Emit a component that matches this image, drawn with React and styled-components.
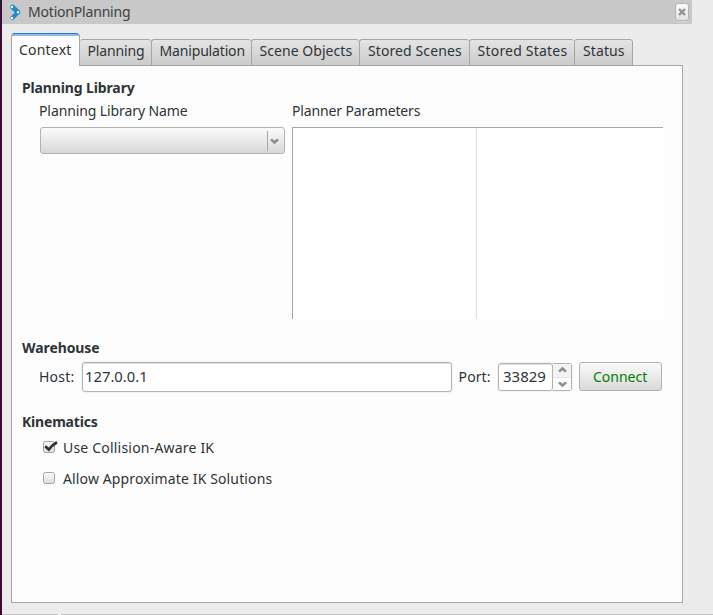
import React from 'react';
import styled, { createGlobalStyle } from 'styled-components';

const Global = createGlobalStyle`
  *, *::before, *::after { box-sizing: border-box; }
  html, body { margin: 0; height: 100%; overflow: hidden; background: #ececec; }
  body {
    font-family: "Noto Sans", "Open Sans", sans-serif;
    font-size: 14px;
    line-height: 20px;
    color: #2e3436;
  }
`;

const Text = styled.span`
  display: block;
  white-space: pre;
  font-size: ${p => p.$size || 14}px;
  font-weight: ${p => (p.$bold ? 700 : 400)};
  letter-spacing: ${p => p.$track || 0}px;
`;

const Window = styled.div`
  width: 713px;
  height: 615px;
  border-left: 2px solid #3b0a35;
  background: #ececec;
  display: flex;
  flex-direction: column;
`;

const TitleBar = styled.header`
  width: 690px;
  height: 24px;
  flex: none;
  display: flex;
  align-items: center;
  padding: 0 3px 0 6px;
  background: #c8c8c8;
`;

const TitleText = styled(Text)`
  margin-left: 6px;
  flex: 1;
  color: #3c4143;
`;

const CloseButton = styled.button`
  width: 14px;
  height: 18px;
  padding: 0;
  border: 1px solid #b4b4b4;
  border-radius: 3px;
  background: linear-gradient(#fafafa, #e2e2e2);
  box-shadow: 0 1px 0 #d8d8d8;
  display: flex;
  align-items: center;
  justify-content: center;
`;

const Tabs = styled.nav`
  display: flex;
  align-items: flex-end;
  height: 33px;
  margin: 9px 0 -1px 9px;
  flex: none;
  z-index: 1;
`;

const Tab = styled.div`
  width: ${p => p.$width}px;
  height: 27px;
  padding: 1px 0 0 ${p => p.$inset || 7}px;
  border: 1px solid #a3a6a6;
  border-left-width: ${p => (p.$first ? 0 : 1)}px;
  border-right-width: ${p => (p.$last ? 1 : 0)}px;
  border-radius: 3px 3px 0 0;
  background: linear-gradient(#e4e4e4, #cbcbcb);
`;

const ActiveTab = styled.div`
  width: 69px;
  height: 33px;
  padding: 6px 0 0 7px;
  border: 1px solid #a3a6a6;
  border-top: 1px solid #2f76cf;
  border-bottom: 0;
  border-radius: 4px 4px 0 0;
  background: linear-gradient(#8abaf2 0 2px, #fdfdfd 2px);
`;

const Panel = styled.main`
  width: 672px;
  height: 538px;
  flex: none;
  margin-left: 9px;
  padding: 12px 19px 0 10px;
  border: 1px solid #a3a6a6;
  background: #fdfdfd;
`;

const Section = styled.section`
  height: ${p => p.$height}px;
`;

const LibraryGrid = styled.div`
  display: grid;
  grid-template-columns: 246px 371px;
  column-gap: 7px;
  margin: 3px 0 0 17px;
`;

const Column = styled.div`
  display: flex;
  flex-direction: column;
  gap: 6px;
`;

const Select = styled.div`
  height: 27px;
  margin-left: 1px;
  border: 1px solid #b1b3b3;
  border-radius: 3px;
  background: linear-gradient(#fafafa, #d9d9d9);
  display: flex;
  justify-content: flex-end;
  align-items: center;
`;

const SelectArrow = styled.div`
  width: 17px;
  height: 20px;
  border-left: 1px solid #a9abab;
  display: flex;
  align-items: center;
  padding-left: 1px;
`;

const Tree = styled.div`
  display: flex;
  height: 192px;
  border-top: 1px solid #a3a6a6;
  border-left: 1px solid #a3a6a6;
  background: #fff;
`;

const TreeColumn = styled.div`
  width: 184px;
  border-right: 1px solid #dcdcdc;
`;

const FormRow = styled.div`
  display: flex;
  align-items: center;
  height: 31px;
  margin: 3px 0 0 17px;
`;

const FieldLabel = styled(Text)`
  width: ${p => p.$width}px;
  padding-left: ${p => p.$lead || 0}px;
`;

const Input = styled.div`
  width: ${p => p.$width}px;
  height: ${p => p.$height}px;
  padding: 0 0 2px ${p => p.$inset}px;
  display: flex;
  align-items: center;
  border: 1px solid #b1b3b3;
  border-radius: 3px;
  background: #fff;
  box-shadow: 0 0 0 1px #f3f3f3, inset 0 1px 0 #dfdfdf;
`;

const Stepper = styled.div`
  width: 19px;
  height: 28px;
  border: 1px solid #b1b3b3;
  border-left: 0;
  border-radius: 0 3px 3px 0;
  display: grid;
  grid-template-rows: 14px 12px;
  box-shadow: 0 1px 0 #f3f3f3, 1px 0 0 #f3f3f3;
`;

const Step = styled.div`
  display: flex;
  align-items: center;
  justify-content: center;
  background: ${p => (p.$up ? '#f3f3f3' : '#fcfcfc')};
  border-bottom: ${p => (p.$up ? '1px solid #e4e4e4' : '0')};
`;

const ConnectButton = styled.div`
  width: 83px;
  height: 29px;
  margin-left: 7px;
  display: flex;
  align-items: center;
  padding-left: 13px;
  color: #008000;
  border: 1px solid #b1b3b3;
  border-radius: 3px;
  background: linear-gradient(#fafafa, #d9d9d9);
`;

const CheckRow = styled.div`
  display: flex;
  align-items: center;
  height: 31px;
  margin-left: 20px;
`;

const CheckIcon = styled.svg`
  width: 18px;
  height: 16px;
  margin: 0 3px 2px 0;
  flex: none;
`;

const Footer = styled.footer`
  flex: none;
  display: flex;
  gap: 3px;
  height: 1px;
  margin-top: 11px;
  background: #f8f8f8;
`;

const FooterLine = styled.div`
  width: ${p => p.$width}px;
  background: #c3c3c3;
`;

const Chevron = ({ up }) => (
  <svg width="11" height="8" viewBox="0 0 11 8">
    <path d={up ? 'M2 5.7 5.5 2.5 9 5.7' : 'M2 2.3 5.5 5.5 9 2.3'} fill="none" stroke="#8b8d8d" strokeWidth="2.5" />
  </svg>
);

const RobotIcon = () => (
  <svg width="14" height="18" viewBox="0 0 14 18">
    <path d="M4.5 4 10 9.2" fill="none" stroke="#1f8ccb" strokeWidth="4.8" strokeLinecap="round" />
    <path d="M10 9.2 4.5 14.8" fill="none" stroke="#1f8ccb" strokeWidth="4.2" strokeLinecap="round" />
    <g fill="#fff"><circle cx="4" cy="4" r="1.2" /><circle cx="10" cy="9.3" r="1.2" /><circle cx="4" cy="15" r="1.2" /></g>
  </svg>
);

const Checkbox = ({ checked }) => (
  <CheckIcon viewBox="0 0 18 16">
    <defs>
      <linearGradient id="box" x2="0" y2="1"><stop stopColor="#fafafa" /><stop offset="1" stopColor="#dcdcdc" /></linearGradient>
    </defs>
    <rect x="1.5" y="2.5" width="11" height="11" rx="2" fill="url(#box)" stroke="#a3a5a5" />
    {checked && <path d="M3.2 7.2 6.8 10.5 Q10 6 15 3.2" fill="none" stroke="#2e3436" strokeWidth="2.7" />}
  </CheckIcon>
);

const TABS = [
  { label: 'Planning', width: 71, inset: 7.5, track: -0.14, first: true },
  { label: 'Manipulation', width: 100, inset: 7.5, track: -0.16 },
  { label: 'Scene Objects', width: 108, inset: 7.6, track: 0.04 },
  { label: 'Stored Scenes', width: 110, inset: 8, track: 0.1 },
  { label: 'Stored States', width: 105, inset: 7.6, track: 0.2 },
  { label: 'Status', width: 59, inset: 8, track: 0.1, last: true },
];

export default function App() {
  return (
    <>
      <Global />
      <Window>
        <TitleBar>
          <RobotIcon />
          <TitleText $track={-0.19}>MotionPlanning</TitleText>
          <CloseButton aria-label="Close">
            <svg width="8" height="8" viewBox="0 0 8 8"><path d="m1 1 6 6m0-6L1 7" stroke="#929292" strokeWidth="2.3" /></svg>
          </CloseButton>
        </TitleBar>
        <Tabs>
          <ActiveTab><Text $track={0.2}>Context</Text></ActiveTab>
          {TABS.map(t => (
            <Tab key={t.label} $width={t.width} $inset={t.inset} $first={t.first} $last={t.last}>
              <Text $track={t.track}>{t.label}</Text>
            </Tab>
          ))}
        </Tabs>
        <Panel>
          <Section $height={260}>
            <Text $bold $track={-0.13}>Planning Library</Text>
            <LibraryGrid>
              <Column>
                <Text $track={-0.1}>Planning Library Name</Text>
                <Select><SelectArrow><Chevron /></SelectArrow></Select>
              </Column>
              <Column>
                <Text $track={-0.13}>Planner Parameters</Text>
                <Tree><TreeColumn /></Tree>
              </Column>
            </LibraryGrid>
          </Section>
          <Section $height={74}>
            <Text $bold $track={-0.08}>Warehouse</Text>
            <FormRow>
              <FieldLabel $width={43} $track={0.2}>Host:</FieldLabel>
              <Input $width={370} $height={30} $inset={2}><Text $size={14.8}>127.0.0.1</Text></Input>
              <FieldLabel $width={46} $lead={6.6} $track={0.1}>Port:</FieldLabel>
              <Input $width={55} $height={28} $inset={4}><Text $size={15}>33829</Text></Input>
              <Stepper><Step $up><Chevron up /></Step><Step><Chevron /></Step></Stepper>
              <ConnectButton><Text>Connect</Text></ConnectButton>
            </FormRow>
          </Section>
          <Section $height={100}>
            <Text $bold $track={-0.2}>Kinematics</Text>
            <CheckRow><Checkbox checked /><Text $track={0.2}>Use Collision-Aware IK</Text></CheckRow>
            <CheckRow><Checkbox /><Text $track={0.13}>Allow Approximate IK Solutions</Text></CheckRow>
          </Section>
        </Panel>
        <Footer><FooterLine $width={56} /><FooterLine $width={652} /></Footer>
      </Window>
    </>
  );
}
